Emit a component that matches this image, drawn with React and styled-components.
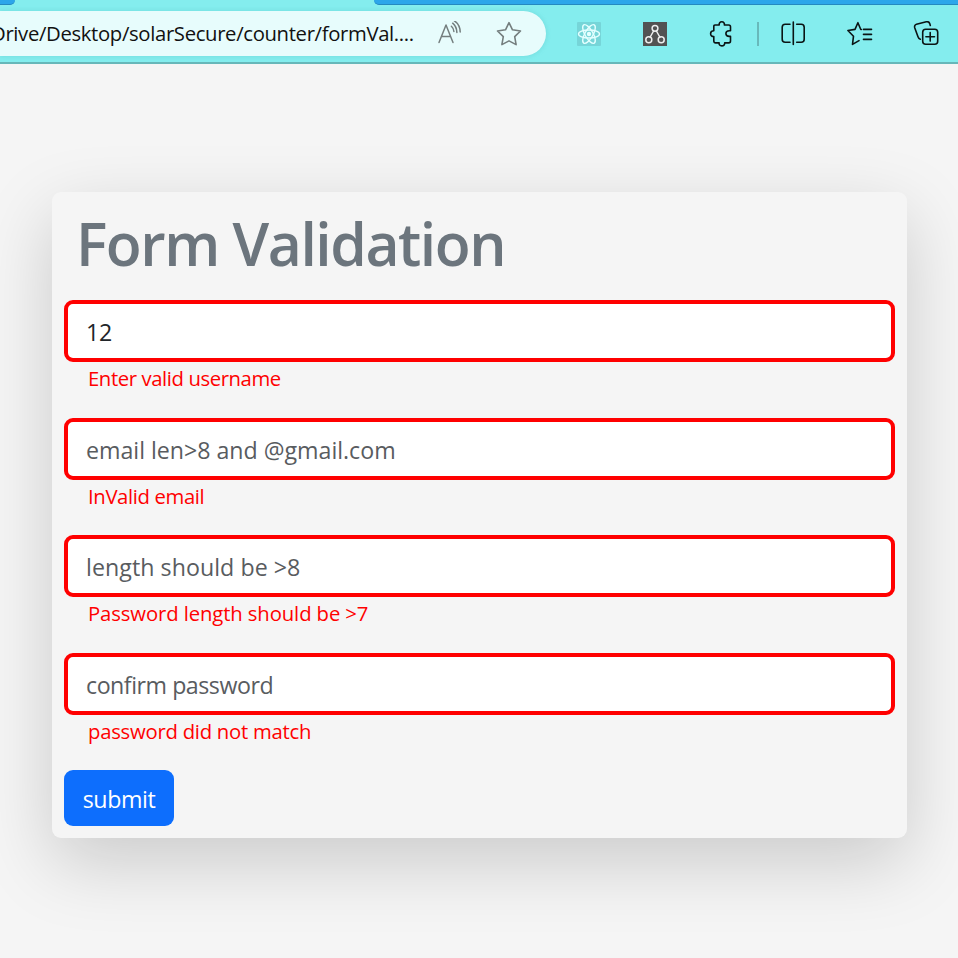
import React from "react";
import styled, { createGlobalStyle } from "styled-components";

const GlobalStyle = createGlobalStyle`
  * { box-sizing: border-box; }
  html, body { margin: 0; padding: 0; background: #f5f5f5; overflow: hidden; }
  body { font-family: "Open Sans", "Noto Sans", sans-serif; }
`;

const Page = styled.div`
  width: 958px;
  height: 958px;
  display: flex;
  flex-direction: column;
  overflow: hidden;
  background: #f5f5f5;
`;

const TabStrip = styled.div`
  height: 5px;
  flex: none;
  display: grid;
  grid-template-columns: 15px 359px 1fr;
  background: #84edee;
`;

const Tab = styled.div`
  height: 5px;
  background: ${(p) => (p.$active ? "#84edee" : "#2ca6ea")};
  border-bottom: ${(p) => (p.$active ? "none" : "1px solid #2489c0")};
  border-radius: ${(p) => p.$radius || "0"};
`;

const Toolbar = styled.header`
  height: 59px;
  flex: none;
  display: flex;
  align-items: flex-start;
  padding-top: 6px;
  background: #84edee;
  border-bottom: 2px solid #67b7b9;
`;

const AddressBar = styled.div`
  width: 546px;
  height: 45px;
  flex: none;
  display: flex;
  align-items: center;
  overflow: hidden;
  background: #e7fcfc;
  border-radius: 0 23px 23px 0;
  box-shadow: 0 0 5px rgba(40, 150, 155, 0.22);
`;

const Url = styled.span`
  width: 438px;
  flex: none;
  margin-left: -9px;
  padding-bottom: 2px;
  color: #111;
  font-size: 20.3px;
  line-height: 30px;
  letter-spacing: ${(p) => p.$spacing}px;
  white-space: nowrap;
`;

const Icon = styled.svg`
  width: ${(p) => p.$size || 26}px;
  height: ${(p) => p.$size || 26}px;
  flex: none;
  margin-left: ${(p) => p.$gap || 0}px;
  fill: none;
  stroke: ${(p) => p.$color || "#0b1414"};
  stroke-width: ${(p) => p.$stroke || 1.6};
  stroke-linecap: round;
  stroke-linejoin: round;
`;

const Actions = styled.div`
  height: 45px;
  display: flex;
  align-items: center;
`;

const Separator = styled.div`
  width: 2px;
  height: 24px;
  margin-left: 22px;
  background: #68b9bb;
`;

const Main = styled.main`
  flex: 1;
  padding: 128px 51px 0 52px;
`;

const Card = styled.form`
  height: 646px;
  padding: 12px;
  border-radius: 9px;
  background: #f5f5f5;
  box-shadow: 0 24px 72px rgba(0, 0, 0, 0.175);
`;

const Title = styled.h1`
  height: 96px;
  margin: 0;
  padding: 3px 0 0 12px;
  color: #6c757d;
  font-size: 58.8px;
  font-weight: 600;
  line-height: 72px;
  letter-spacing: ${(p) => p.$spacing}px;
  white-space: nowrap;
`;

const Field = styled.div`
  height: 117.6px;
`;

const Input = styled.input`
  display: block;
  width: 100%;
  height: 62px;
  margin: 0;
  padding: 2px 18px 0;
  border: 4px solid #ff0000;
  border-radius: 9px;
  outline: none;
  background: #fff;
  color: #212529;
  font-family: inherit;
  font-size: 23.2px;
  letter-spacing: ${(p) => p.$spacing}px;
  &::placeholder { color: #595c5f; opacity: 1; }
`;

const ErrorText = styled.div`
  padding-left: 24px;
  color: #ff0000;
  font-size: 20.3px;
  line-height: 32px;
  letter-spacing: ${(p) => p.$spacing}px;
  white-space: nowrap;
`;

const Submit = styled.button`
  width: 110px;
  height: 56px;
  padding: 1px 0 0;
  border: 0;
  border-radius: 9px;
  background: #0d6efd;
  color: #fff;
  font-family: inherit;
  font-size: 23.2px;
  letter-spacing: ${(p) => p.$spacing}px;
`;

const fields = [
  { value: "12", error: "Enter valid username", is: -0.3, es: -0.4 },
  { hint: "email len>8 and @gmail.com", error: "InValid email", is: -0.02, es: -0.36 },
  { hint: "length should be >8", error: "Password length should be >7", is: 0.05, es: -0.11 },
  { hint: "confirm password", error: "password did not match", is: -0.47, es: -0.25 },
];

const ReadAloud = () => (
  <Icon viewBox="0 0 26 26" $gap={8} $color="#747e7e" $stroke={1.5}>
    <path d="M2 21.500L9 4l7 17.500M4.600 15.500h8.800M15.700 2.200c2.700 2.200 4 5 4.200 9.300M17.400-.2c4 2.700 5.700 6.500 5.800 11.200M14.400 5.200c1.500 1.300 2.300 3 2.500 5.300" />
  </Icon>
);

const Star = () => (
  <Icon viewBox="0 0 26 26" $gap={33} $color="#747e7e">
    <path d="M13 1.700l3.500 7.100 8 1.200-5.800 5.600 1.400 8L13 19.900l-7.100 3.700 1.400-8L1.500 10l8-1.200z" />
  </Icon>
);

const ReactLogo = () => (
  <Icon viewBox="0 0 24 24" $size={24} $gap={31} $color="#e5ffff" $stroke={1.4}>
    <rect width="24" height="24" rx="1" fill="#76d5d8" stroke="none" />
    <circle cx="12" cy="12" r="2.200" fill="#e5ffff" stroke="none" />
    <ellipse cx="12" cy="12" rx="10.500" ry="4" />
    <ellipse cx="12" cy="12" rx="10.500" ry="4" transform="rotate(60 12 12)" />
    <ellipse cx="12" cy="12" rx="10.500" ry="4" transform="rotate(120 12 12)" />
  </Icon>
);

const Graph = () => (
  <Icon viewBox="0 0 24 24" $size={24} $gap={42} $color="#eee" $stroke={1.5}>
    <rect width="24" height="24" fill="#525252" stroke="none" />
    <circle cx="12" cy="6.300" r="2.900" />
    <circle cx="5.800" cy="17.800" r="3" />
    <circle cx="18.200" cy="17.800" r="3" />
    <path d="M10.600 9l-3.400 6M13.400 9l3.400 6" />
  </Icon>
);

const Puzzle = () => (
  <Icon viewBox="0 0 24 26" $size={26} $gap={42}>
    <path d="M5 4h4.200c-.3-2 .8-3.200 2.600-3.200s2.900 1.200 2.600 3.200h4.300c1.100 0 1.800.7 1.800 1.800v4h-1.200c-2 0-3.400 1.200-3.400 2.800s1.400 2.800 3.400 2.800h1.200v4.700c0 1.100-.7 1.800-1.800 1.800h-4c.2 1.800-1 3-2.900 3s-3-1.200-2.700-3H5.600c-1.100 0-1.800-.7-1.800-1.800v-4.600C1.900 15.800.6 14.500.6 12.700s1.200-2.900 3.200-2.900V5.200C3.800 4.500 4.200 4 5 4z" />
  </Icon>
);

const SplitScreen = () => (
  <Icon viewBox="0 0 26 26" $gap={21}>
    <path d="M13.300 1v22.500M10 3.300H5.200c-1.900 0-3 1.100-3 3v11.900c0 1.900 1.100 3 3 3H10M16.700 3.300h4.500c1.900 0 3 1.100 3 3v11.900c0 1.900-1.100 3-3 3h-4.500" />
  </Icon>
);

const Favorites = () => (
  <Icon viewBox="0 0 26 26" $gap={41}>
    <path d="M14.400 8.500h-.6L10.900 1.700 8 8.400l-7.100 1.100 5.600 5.700-1 8.200 6.500-3.800M16.500 8.400h8M16.500 13.400h8M16.500 18.400h8" />
  </Icon>
);

const Collections = () => (
  <Icon viewBox="0 0 26 26" $gap={40}>
    <rect x="9.700" y="8.300" width="15" height="15" rx="3" />
    <path d="M17.200 11.500v8.600M12.900 15.800h8.600M7.300 18.200c-1.200-.3-1.900-1.200-2.300-2.500L1.800 6.900c-.6-1.800.1-3.200 1.700-3.700l9.800-2.400c1.700-.4 3 .4 3.500 2l.5 1.600" />
  </Icon>
);

export default function App() {
  return (
    <>
      <GlobalStyle />
      <Page>
        <TabStrip>
          <Tab $radius="0 0 6px 0" />
          <Tab $active />
          <Tab $radius="0 0 0 6px" />
        </TabStrip>
        <Toolbar>
          <AddressBar>
            <Url $spacing={-0.34}>Drive/Desktop/solarSecure/counter/formVal....</Url>
            <ReadAloud />
            <Star />
          </AddressBar>
          <Actions>
            <ReactLogo />
            <Graph />
            <Puzzle />
            <Separator />
            <SplitScreen />
            <Favorites />
            <Collections />
          </Actions>
        </Toolbar>
        <Main>
          <Card onSubmit={(e) => e.preventDefault()}>
            <Title $spacing={-1.47}>Form Validation</Title>
            {fields.map((f) => (
              <Field key={f.error}>
                <Input type="text" defaultValue={f.value} placeholder={f.hint} $spacing={f.is} />
                <ErrorText $spacing={f.es}>{f.error}</ErrorText>
              </Field>
            ))}
            <Submit type="submit" $spacing={-0.4}>submit</Submit>
          </Card>
        </Main>
      </Page>
    </>
  );
}
